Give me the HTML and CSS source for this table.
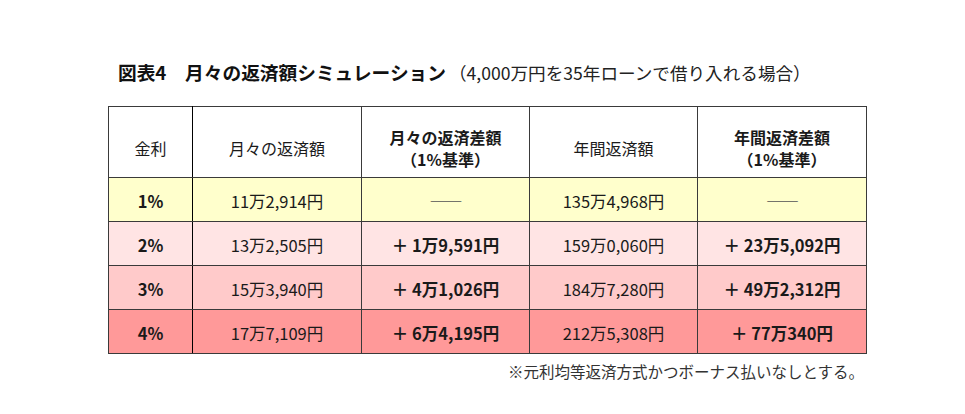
FILE: index.html
```html
<!DOCTYPE html>
<html lang="ja">
<head>
<meta charset="utf-8">
<link rel="stylesheet" href="styles.css">
</head>
<body>
<div class="page">
  <h1 class="title"><span class="title-main">図表4　月々の返済額シミュレーション</span><span class="title-sub">（4,000万円を35年ローンで借り入れる場合）</span></h1>
  <table class="sim">
    <colgroup>
      <col class="c1"><col class="c2"><col class="c3"><col class="c4"><col class="c5">
    </colgroup>
    <thead>
      <tr>
        <th class="first">金利</th>
        <th>月々の返済額</th>
        <th class="bold">月々の返済差額<br>（1%基準）</th>
        <th>年間返済額</th>
        <th class="bold">年間返済差額<br>（1%基準）</th>
      </tr>
    </thead>
    <tbody>
      <tr class="r1">
        <td class="first bold">1%</td>
        <td>11万2,914円</td>
        <td class="dash">――</td>
        <td>135万4,968円</td>
        <td class="dash">――</td>
      </tr>
      <tr class="r2">
        <td class="first bold">2%</td>
        <td>13万2,505円</td>
        <td class="bold">＋ 1万9,591円</td>
        <td>159万0,060円</td>
        <td class="bold">＋ 23万5,092円</td>
      </tr>
      <tr class="r3">
        <td class="first bold">3%</td>
        <td>15万3,940円</td>
        <td class="bold">＋ 4万1,026円</td>
        <td>184万7,280円</td>
        <td class="bold">＋ 49万2,312円</td>
      </tr>
      <tr class="r4">
        <td class="first bold">4%</td>
        <td>17万7,109円</td>
        <td class="bold">＋ 6万4,195円</td>
        <td>212万5,308円</td>
        <td class="bold">＋ 77万340円</td>
      </tr>
    </tbody>
  </table>
  <p class="note">※元利均等返済方式かつボーナス払いなしとする。</p>
</div>
</body>
</html>
```

FILE: styles.css
```css
html, body {
  margin: 0;
  padding: 0;
  background: #ffffff;
}

body {
  font-family: "Noto Sans CJK JP", "Noto Sans", sans-serif;
  color: #1a1a1a;
}

.page {
  padding: 58px 0 0 108px;
  width: 758px;
}

.title {
  margin: 0 0 20px 10px;
  font-size: 18px;
  line-height: 27px;
  font-weight: normal;
  white-space: nowrap;
  display: flex;
  align-items: baseline;
}

.title-main {
  font-weight: bold;
  font-size: 18.7px;
  color: #111;
}

.title-sub {
  font-size: 17.6px;
  color: #222;
  margin-left: 3px;
}

.sim {
  border-collapse: collapse;
  width: 758px;
  table-layout: fixed;
  font-size: 16.5px;
}

.c1 { width: 84px; }
.c2 { width: 169px; }
.c3 { width: 168px; }
.c4 { width: 168px; }
.c5 { width: 169px; }

.sim th,
.sim td {
  border: 1px solid #3a3a3a;
  text-align: center;
  padding: 0;
  color: #1a1a1a;
}

.sim th {
  height: 71px;
  font-weight: normal;
  font-size: 16px;
  line-height: 22px;
  padding-top: 12px;
  box-sizing: border-box;
  background: #ffffff;
}

.sim td {
  height: 44px;
  padding-top: 3px;
  box-sizing: border-box;
  line-height: 20px;
}

.sim .first {
  border-right: 1.5px solid #000;
}

.sim .bold {
  font-weight: bold;
}

.sim td.dash {
  color: #555;
  letter-spacing: -1px;
}

.r1 td { background: #ffffcc; }
.r2 td { background: #ffe4e4; }
.r3 td { background: #ffcaca; }
.r4 td { background: #ff9999; }

.note {
  margin: 7px 2px 0 0;
  text-align: right;
  font-size: 15.5px;
  line-height: 20px;
  color: #333;
}
```
